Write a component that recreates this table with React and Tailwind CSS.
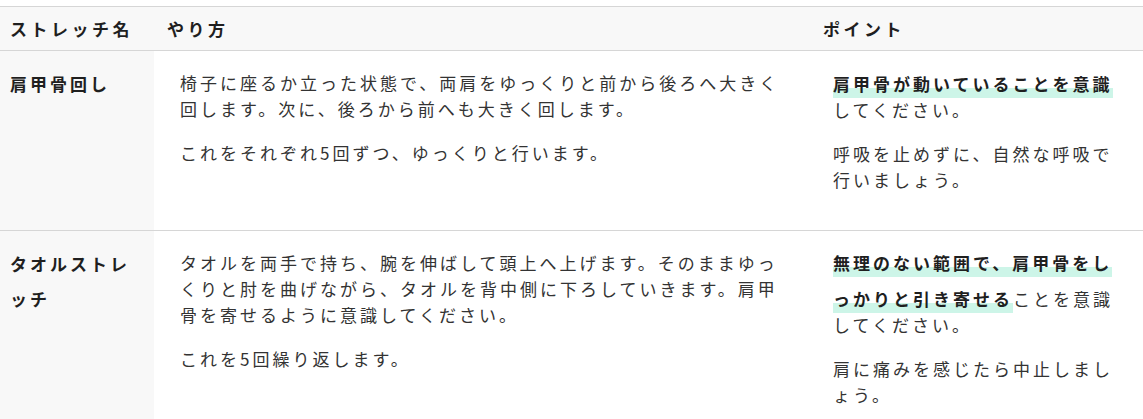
const rows = [
  {
    name: '肩甲骨回し',
    how: [
      '椅子に座るか立った状態で、両肩をゆっくりと前から後ろへ大きく回します。次に、後ろから前へも大きく回します。',
      'これをそれぞれ5回ずつ、ゆっくりと行います。',
    ],
    point: [
      [{ mark: '肩甲骨が動いていることを意識' }, 'してください。'],
      ['呼吸を止めずに、自然な呼吸で行いましょう。'],
    ],
  },
  {
    name: 'タオルストレッチ',
    how: [
      'タオルを両手で持ち、腕を伸ばして頭上へ上げます。そのままゆっくりと肘を曲げながら、タオルを背中側に下ろしていきます。肩甲骨を寄せるように意識してください。',
      'これを5回繰り返します。',
    ],
    point: [
      [{ mark: '無理のない範囲で、肩甲骨をしっかりと引き寄せる' }, 'ことを意識してください。'],
      ['肩に痛みを感じたら中止しましょう。'],
    ],
  },
]

// bold lines sit a bit lower than plain ones: extra room above only
const Bold = ({ children, mark }) => (
  <strong className="font-bold text-[#1f1f1f] leading-[35px] align-[4.5px]">
    <span
      className={
        'leading-[26px] align-[-4.5px] ' +
        (mark ? 'bg-[linear-gradient(transparent_64%,#cdf5e8_64%)] pb-[2px]' : '')
      }
    >
      {children}
    </span>
  </strong>
)

export default function App() {
  return (
    <div
      className="bg-white pt-[6px] text-[#333] text-[17px] tracking-[3px]"
      style={{ fontFamily: '"Noto Sans CJK JP", "Noto Sans", sans-serif' }}
    >
      <table className="w-full table-fixed border-collapse">
        <colgroup>
          <col className="w-[154px]" />
          <col className="w-[657px]" />
          <col />
        </colgroup>
        <thead>
          <tr className="bg-[#f8f8f8] border-y border-[#d6d6d6]">
            <th className="h-[44px] pl-[10px] text-left font-bold text-[#1f1f1f] tracking-[3.5px]">ストレッチ名</th>
            <th className="h-[44px] pl-[13px] text-left font-bold text-[#1f1f1f] tracking-[3.5px]">やり方</th>
            <th className="h-[44px] pl-[12px] text-left font-bold text-[#1f1f1f] tracking-[3.5px]">ポイント</th>
          </tr>
        </thead>
        <tbody>
          {rows.map((r) => (
            <tr key={r.name} className="border-b border-[#d6d6d6] align-top">
              <td className="bg-[#f8f8f8] px-[10px] pt-[10px] leading-[26px]">
                <Bold>{r.name}</Bold>
              </td>
              <td className="pl-[26px] pr-[20px] pt-[19px] pb-[19px] leading-[26px]">
                {r.how.map((p, i) => (
                  <p key={i} className="mb-[18px]">{p}</p>
                ))}
              </td>
              <td className="pl-[22px] pr-[22px] pt-[10px] pb-[19px] leading-[26px]">
                {r.point.map((p, i) => (
                  <p key={i} className="mb-[18px]">
                    {p.map((part, j) =>
                      typeof part === 'string' ? (
                        <span key={j}>{part}</span>
                      ) : (
                        <Bold key={j} mark>{part.mark}</Bold>
                      )
                    )}
                  </p>
                ))}
              </td>
            </tr>
          ))}
        </tbody>
      </table>
    </div>
  )
}
